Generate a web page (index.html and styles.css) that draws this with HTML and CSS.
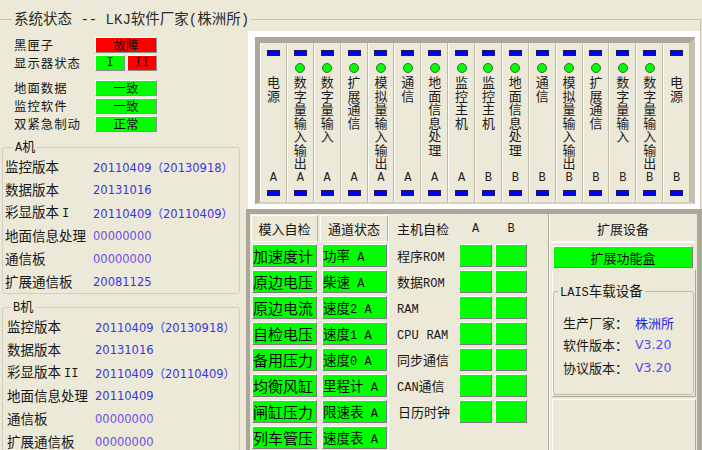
FILE: index.html
```html
<!DOCTYPE html>
<html lang="zh-CN">
<head>
<meta charset="utf-8">
<title>系统状态</title>
<link rel="stylesheet" href="styles.css">
</head>
<body>
<fieldset class="win">
  <legend class="win-title">系统状态<span class="m"> -- LKJ</span>软件厂家<span class="m">(</span>株洲所<span class="m">)</span></legend>
  <div class="body">
    <div class="left">
      <div class="status">
        <div class="st-row"><span class="st-label">黑匣子</span><span class="lamp red wide">故障</span></div>
        <div class="st-row"><span class="st-label">显示器状态</span><span class="lamp green half"><span class="m">I</span></span><span class="lamp red half second"><span class="m">II</span></span></div>
        <div class="st-row sep"><span class="st-label">地面数据</span><span class="lamp green wide">一致</span></div>
        <div class="st-row"><span class="st-label">监控软件</span><span class="lamp green wide">一致</span></div>
        <div class="st-row"><span class="st-label">双紧急制动</span><span class="lamp green wide">正常</span></div>
      </div>

      <fieldset class="grp grp-a">
        <legend class="grp-title"><span class="m">A</span>机</legend>
        <div class="vgrid">
          <span class="vl">监控版本</span><span class="vv">20110409（20130918）</span>
          <span class="vl">数据版本</span><span class="vv">20131016</span>
          <span class="vl">彩显版本 <span class="m">I</span></span><span class="vv">20110409（20110409）</span>
          <span class="vl">地面信息处理</span><span class="vv z">00000000</span>
          <span class="vl">通信板</span><span class="vv z">00000000</span>
          <span class="vl">扩展通信板</span><span class="vv">20081125</span>
        </div>
      </fieldset>

      <fieldset class="grp grp-b">
        <legend class="grp-title"><span class="m">B</span>机</legend>
        <div class="vgrid">
          <span class="vl">监控版本</span><span class="vv">20110409（20130918）</span>
          <span class="vl">数据版本</span><span class="vv">20131016</span>
          <span class="vl">彩显版本 <span class="m">II</span></span><span class="vv">20110409（20110409）</span>
          <span class="vl">地面信息处理</span><span class="vv">20110409</span>
          <span class="vl">通信板</span><span class="vv z">00000000</span>
          <span class="vl">扩展通信板</span><span class="vv z">00000000</span>
        </div>
      </fieldset>
    </div>

    <div class="right">
      <div class="rack">
        <div class="frame">
          <div class="slot"><span class="bar"></span><span class="dot off"></span><span class="vt">电源</span><span class="ab">A</span><span class="bar bottom"></span></div>
          <div class="slot"><span class="bar"></span><span class="dot"></span><span class="vt">数字量输入输出</span><span class="ab">A</span><span class="bar bottom"></span></div>
          <div class="slot"><span class="bar"></span><span class="dot"></span><span class="vt">数字量输入</span><span class="ab">A</span><span class="bar bottom"></span></div>
          <div class="slot"><span class="bar"></span><span class="dot"></span><span class="vt">扩展通信</span><span class="ab">A</span><span class="bar bottom"></span></div>
          <div class="slot"><span class="bar"></span><span class="dot"></span><span class="vt">模拟量输入输出</span><span class="ab">A</span><span class="bar bottom"></span></div>
          <div class="slot"><span class="bar"></span><span class="dot"></span><span class="vt">通信</span><span class="ab">A</span><span class="bar bottom"></span></div>
          <div class="slot"><span class="bar"></span><span class="dot"></span><span class="vt">地面信息处理</span><span class="ab">A</span><span class="bar bottom"></span></div>
          <div class="slot"><span class="bar"></span><span class="dot"></span><span class="vt">监控主机</span><span class="ab">A</span><span class="bar bottom"></span></div>
          <div class="slot"><span class="bar"></span><span class="dot"></span><span class="vt">监控主机</span><span class="ab">B</span><span class="bar bottom"></span></div>
          <div class="slot"><span class="bar"></span><span class="dot"></span><span class="vt">地面信息处理</span><span class="ab">B</span><span class="bar bottom"></span></div>
          <div class="slot"><span class="bar"></span><span class="dot"></span><span class="vt">通信</span><span class="ab">B</span><span class="bar bottom"></span></div>
          <div class="slot"><span class="bar"></span><span class="dot"></span><span class="vt">模拟量输入输出</span><span class="ab">B</span><span class="bar bottom"></span></div>
          <div class="slot"><span class="bar"></span><span class="dot"></span><span class="vt">扩展通信</span><span class="ab">B</span><span class="bar bottom"></span></div>
          <div class="slot"><span class="bar"></span><span class="dot"></span><span class="vt">数字量输入</span><span class="ab">B</span><span class="bar bottom"></span></div>
          <div class="slot"><span class="bar"></span><span class="dot"></span><span class="vt">数字量输入输出</span><span class="ab">B</span><span class="bar bottom"></span></div>
          <div class="slot"><span class="bar"></span><span class="dot off"></span><span class="vt">电源</span><span class="ab">B</span><span class="bar bottom"></span></div>
        </div>
      </div>

      <div class="lower">
        <div class="c1">
          <div class="sub sub-a">
            <div class="hcell">模入自检</div>
            <div class="gcell first">加速度计</div>
            <div class="gcell">原边电压</div>
            <div class="gcell">原边电流</div>
            <div class="gcell">自检电压</div>
            <div class="gcell">备用压力</div>
            <div class="gcell">均衡风缸</div>
            <div class="gcell">闸缸压力</div>
            <div class="gcell">列车管压</div>
          </div>
          <div class="sub sub-b">
            <div class="hcell">通道状态</div>
            <div class="gcell first">功率<span class="m"> A</span></div>
            <div class="gcell">柴速<span class="m"> A</span></div>
            <div class="gcell">速度<span class="m">2 A</span></div>
            <div class="gcell">速度<span class="m">1 A</span></div>
            <div class="gcell">速度<span class="m">0 A</span></div>
            <div class="gcell">里程计<span class="m"> A</span></div>
            <div class="gcell">限速表<span class="m"> A</span></div>
            <div class="gcell">速度表<span class="m"> A</span></div>
          </div>
        </div>

        <div class="c2">
          <div class="r2 head2"><span class="l2">主机自检</span><span class="hab ha"><span class="m">A</span></span><span class="hab hb"><span class="m">B</span></span></div>
          <div class="r2 first"><span class="l2">程序<span class="m">ROM</span></span><span class="gbox ga"></span><span class="gbox gb"></span></div>
          <div class="r2"><span class="l2">数据<span class="m">ROM</span></span><span class="gbox ga"></span><span class="gbox gb"></span></div>
          <div class="r2"><span class="l2"><span class="m">RAM</span></span><span class="gbox ga"></span><span class="gbox gb"></span></div>
          <div class="r2"><span class="l2"><span class="m">CPU</span><span class="m gapm">RAM</span></span><span class="gbox ga"></span><span class="gbox gb"></span></div>
          <div class="r2"><span class="l2">同步通信</span><span class="gbox ga"></span><span class="gbox gb"></span></div>
          <div class="r2"><span class="l2"><span class="m">CAN</span>通信</span><span class="gbox ga"></span><span class="gbox gb"></span></div>
          <div class="r2"><span class="l2 shift">日历时钟</span><span class="gbox ga"></span><span class="gbox gb"></span></div>
        </div>

        <div class="c3">
          <div class="h3">扩展设备</div>
          <div class="gbar">扩展功能盒</div>
          <div class="panel">
            <fieldset class="lais">
              <legend class="lais-title"><span class="m">LAIS</span>车载设备</legend>
              <div class="lrows">
                <span class="ll">生产厂家：</span><span class="lv cn">株洲所</span>
                <span class="ll">软件版本：</span><span class="lv">V3.20</span>
                <span class="ll">协议版本：</span><span class="lv">V3.20</span>
              </div>
            </fieldset>
          </div>
          <div class="panel2"></div>
        </div>
      </div>
    </div>
  </div>
</fieldset>
</body>
</html>
```

FILE: styles.css
```css
* { box-sizing: border-box; }

html, body {
  margin: 0;
  padding: 0;
  width: 702px;
  height: 450px;
  overflow: hidden;
  background: #ECE9D8;
}

body {
  font-family: "Noto Sans CJK SC", "Noto Sans", sans-serif;
  font-size: 13.5px;
  color: #161616;
}

.m { font-family: "Liberation Mono", monospace; font-size: 12px; }

/* outer group box */
.win {
  margin: 8px 0 0 0;
  padding: 0;
  width: 701px;
  min-width: 0;
  height: 442px;
  border: 1px solid #C4C1B2;
  border-left: 0;
  border-bottom: 0;
}

.win-title {
  margin-left: 12px;
  padding: 0 2px;
  font-size: 14.5px;
  line-height: 20px;
  color: #2a2a2a;
}
.win-title .m { font-size: 14px; }

.body {
  display: flex;
  width: 702px;
  height: 422px;
  overflow: hidden;
}

/* left column */
.left { width: 246px; flex: none; }

.status { padding-top: 7px; }

.st-row {
  display: flex;
  align-items: center;
  height: 16px;
  margin-top: 2px;
}
.st-row:first-child { margin-top: 0; }
.st-row.sep { margin-top: 9px; }

.st-label {
  width: 95px;
  padding-left: 14px;
  font-size: 12.4px;
  letter-spacing: 1px;
  line-height: 16px;
  white-space: nowrap;
}

.lamp {
  height: 16px;
  display: flex;
  align-items: center;
  justify-content: center;
  line-height: 14px;
  font-size: 12.4px;
  border: 1px solid;
  border-color: #fdfdfd #8c8c8c #8c8c8c #fdfdfd;
  color: #111;
}
.lamp.wide { width: 62px; }
.lamp.half { width: 30px; }
.lamp.second { margin-left: 2px; }
.red { background: #FF0000; }
.green { background: #00FF00; }

.grp {
  margin: 7px 0 0 2px;
  width: 238px;
  min-width: 0;
  padding: 0 0 0 2px;
  border: 1px solid #D0CEBF;
  border-radius: 3px;
}
.grp-b { margin-top: 5px; padding-left: 4px; }

.grp-title {
  margin-left: 8px;
  padding: 0 2px;
  line-height: 14px;
  font-size: 13px;
}
.grp-b .grp-title { margin-left: 4px; }

.vgrid {
  display: grid;
  grid-template-columns: 88px 1fr;
  grid-auto-rows: 23px;
  align-items: center;
}

.vl { line-height: 23px; white-space: nowrap; }

.vv {
  font-family: "DejaVu Sans", "Noto Sans CJK SC", sans-serif;
  font-size: 11.5px;
  color: #3a34e4;
  white-space: nowrap;
}
.vv.z { color: #6d4fe6; }

/* right column */
.right { width: 456px; flex: none; }

.rack {
  margin: 1px 2px 0;
  height: 178px;
  background: #fff;
  padding: 6px 5px 5px 7px;
}

.frame {
  height: 100%;
  display: flex;
  background: #ECE9D8;
  border-style: solid;
  border-width: 6px 5px 2px 5px;
  border-color: #ACA899 #C3C0B0 #D5D2C3 #ACA899;
}

.slot {
  flex: 1;
  display: flex;
  flex-direction: column;
  align-items: center;
  padding-top: 7px;
  border-left: 1px solid #FBFBF7;
  border-right: 1px solid #BDB9A7;
}

.bar {
  flex: none;
  width: 13px;
  height: 6px;
  background: #0000FF;
  border: 1px solid #1b1b5e;
}
.bar.bottom { margin: 6px 0 6px; }

.dot {
  flex: none;
  width: 10px;
  height: 10px;
  margin-top: 7px;
  border-radius: 50%;
  background: #00FF00;
  border: 1px solid #3a6a3a;
}
.dot.off { visibility: hidden; }

.vt {
  flex: none;
  margin-top: 3px;
  height: 95px;
  writing-mode: vertical-rl;
  text-orientation: upright;
  font-size: 13px;
  line-height: 13px;
  letter-spacing: 0.5px;
  color: #1c1c1c;
}

.ab {
  margin-top: auto;
  font-family: "Liberation Mono", monospace;
  font-size: 12px;
  line-height: 12px;
  color: #222;
}

/* lower section */
.lower {
  height: 243px;
  display: flex;
  border-style: solid;
  border-color: #ACA899;
  border-width: 5px 5px 0 4px;
}

.c1 { width: 138px; flex: none; display: flex; }

.sub { width: 69px; display: flex; flex-direction: column; }

.hcell {
  height: 27px;
  margin: 1px 1px 0;
  display: flex;
  align-items: center;
  justify-content: center;
  font-size: 13px;
  border: 1px solid;
  border-color: #fff #B3B09F #fff #fff;
  white-space: nowrap;
}
.sub-b .hcell { margin: 1px 0 0 1px; }

.gcell {
  display: block;
  height: 23px;
  margin: 3px 2px 0;
  background: #00FF00;
  border: 1px solid;
  border-color: #fff #7c7c7c #7c7c7c #fff;
  line-height: 21px;
  white-space: nowrap;
  overflow: hidden;
  color: #0a0a0a;
}
.gcell.first { margin-top: 2px; }
.sub-a .gcell { font-size: 15px; }
.sub-b .gcell { margin: 3px 1px 0 3px; font-size: 13.5px; }
.sub-b .gcell.first { margin-top: 2px; }
.gcell .m { font-size: 12px; }

.c2 {
  width: 161px;
  flex: none;
  border-left: 1px solid #fff;
  border-right: 1px solid #ACA899;
}

.r2 {
  display: flex;
  align-items: center;
  height: 23px;
  margin-top: 3px;
}
.r2.head2 { height: 27px; margin-top: 1px; }
.r2.first { margin-top: 2px; }

.l2 {
  width: 70px;
  padding-left: 8px;
  white-space: nowrap;
  flex: none;
  font-size: 13px;
}
.l2.shift { padding-left: 9px; }
.gapm { margin-left: 8px; }

.hab { display: flex; justify-content: center; }
.ha { width: 33px; margin-right: 3px; }
.hb { width: 32px; }

.gbox {
  height: 23px;
  background: #00FF00;
  border: 1px solid;
  border-color: #fff #7c7c7c #7c7c7c #fff;
}
.gbox.ga { width: 33px; margin-right: 3px; }
.gbox.gb { width: 32px; }

.c3 {
  width: 148px;
  flex: none;
  display: flex;
  flex-direction: column;
  border-left: 1px solid #fff;
}

.h3 {
  height: 28px;
  margin: 1px 2px 0 1px;
  display: flex;
  align-items: center;
  justify-content: center;
  font-size: 13px;
  border-bottom: 2px solid #fff;
}

.gbar {
  height: 22px;
  margin: 3px 4px 0 3px;
  background: #00FF00;
  border: 1px solid;
  border-color: #fff #7c7c7c #7c7c7c #fff;
  display: flex;
  align-items: center;
  justify-content: center;
  font-size: 13px;
  color: #0a0a0a;
}

.panel {
  height: 127px;
  margin: 2px 1px 0 2px;
  border-left: 1px solid #fff;
  border-right: 1px solid #ACA899;
  border-bottom: 1px solid #ACA899;
}

.lais {
  margin: 12px 1px 0 0;
  height: 113px;
  min-width: 0;
  padding: 0 0 0 4px;
  border: 1px solid #BDBAAB;
  border-radius: 3px;
}

.lais-title {
  padding: 0 2px;
  line-height: 16px;
  font-size: 13.5px;
}
.lais-title .m { font-size: 12px; }

.lrows {
  padding: 10px 0 0 5px;
  display: grid;
  grid-template-columns: 72px auto;
  grid-auto-rows: 22.5px;
  align-items: center;
  font-size: 13px;
}

.ll { white-space: nowrap; }

.lv {
  font-family: "DejaVu Sans", sans-serif;
  font-size: 12.5px;
  color: #5548ee;
}
.lv.cn {
  font-family: "Noto Sans CJK SC", sans-serif;
  font-size: 13px;
  color: #2424ea;
}

.panel2 {
  flex: 1;
  margin: 2px 1px 0 2px;
  border-top: 1px solid #fff;
  border-left: 1px solid #fff;
  border-right: 1px solid #ACA899;
}
```
